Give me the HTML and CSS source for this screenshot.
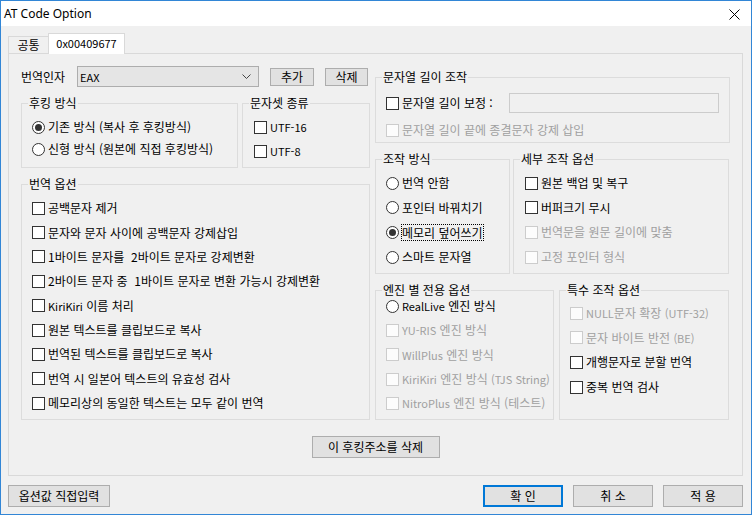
FILE: index.html
```html
<!DOCTYPE html>
<html lang="ko">
<head>
<meta charset="utf-8">
<title>AT Code Option</title>
<link rel="stylesheet" href="styles.css">
</head>
<body>
<div class="window">
  <header class="titlebar">
    <span class="title">AT Code Option</span>
    <svg class="close" width="11" height="11" viewBox="0 0 11 11"><path d="M0.5 0.5 L10.5 10.5 M10.5 0.5 L0.5 10.5" stroke="#000" stroke-width="1" fill="none"/></svg>
  </header>
  <main class="client">
    <nav class="tabs">
      <div class="tab tab-common">공통</div>
      <div class="tab tab-active"><span class="lat">0x00409677</span></div>
    </nav>
    <section class="panel">
      <div class="cols">
        <div class="col-left">
          <div class="arg-row">
            <span class="arg-label">번역인자</span>
            <div class="combo"><span class="lat">EAX</span><svg width="9" height="5" viewBox="0 0 9 5"><path d="M0.5 0.5 L4.5 4.5 L8.5 0.5" stroke="#444" stroke-width="1" fill="none"/></svg></div>
            <button class="btn btn-small btn-add">추가</button>
            <button class="btn btn-small btn-del">삭제</button>
          </div>

          <div class="group-row row-hook">
            <div class="group g-hook">
              <div class="gt">후킹 방식</div>
              <div class="items">
                <div class="item"><span class="rb on"></span><span>기존 방식 (복사 후 후킹방식)</span></div>
                <div class="item"><span class="rb"></span><span>신형 방식 (원본에 직접 후킹방식)</span></div>
              </div>
            </div>
            <div class="group g-charset">
              <div class="gt">문자셋 종류</div>
              <div class="items">
                <div class="item"><span class="cb"></span><span class="lat">UTF-16</span></div>
                <div class="item"><span class="cb"></span><span class="lat">UTF-8</span></div>
              </div>
            </div>
          </div>

          <div class="group g-trans">
            <div class="gt">번역 옵션</div>
            <div class="items">
              <div class="item"><span class="cb"></span><span>공백문자 제거</span></div>
              <div class="item"><span class="cb"></span><span>문자와 문자 사이에 공백문자 강제삽입</span></div>
              <div class="item"><span class="cb"></span><span>1바이트 문자를  2바이트 문자로 강제변환</span></div>
              <div class="item"><span class="cb"></span><span>2바이트 문자 중  1바이트 문자로 변환 가능시 강제변환</span></div>
              <div class="item"><span class="cb"></span><span><span class="lat">KiriKiri</span> 이름 처리</span></div>
              <div class="item"><span class="cb"></span><span>원본 텍스트를 클립보드로 복사</span></div>
              <div class="item"><span class="cb"></span><span>번역된 텍스트를 클립보드로 복사</span></div>
              <div class="item"><span class="cb"></span><span>번역 시 일본어 텍스트의 유효성 검사</span></div>
              <div class="item"><span class="cb"></span><span>메모리상의 동일한 텍스트는 모두 같이 번역</span></div>
            </div>
          </div>
        </div>

        <div class="col-right">
          <div class="group g-strlen">
            <div class="gt">문자열 길이 조작</div>
            <div class="items">
              <div class="item item-len"><span class="cb"></span><span>문자열 길이 보정 :</span><span class="edit"></span></div>
              <div class="item item-term dis"><span class="cb"></span><span>문자열 길이 끝에 종결문자 강제 삽입</span></div>
            </div>
          </div>

          <div class="group-row row-mode">
            <div class="group g-mode">
              <div class="gt">조작 방식</div>
              <div class="items">
                <div class="item"><span class="rb"></span><span>번역 안함</span></div>
                <div class="item"><span class="rb"></span><span>포인터 바꿔치기</span></div>
                <div class="item"><span class="rb on"></span><span class="focus">메모리 덮어쓰기</span></div>
                <div class="item"><span class="rb"></span><span>스마트 문자열</span></div>
              </div>
            </div>
            <div class="group g-detail">
              <div class="gt">세부 조작 옵션</div>
              <div class="items">
                <div class="item"><span class="cb"></span><span>원본 백업 및 복구</span></div>
                <div class="item"><span class="cb"></span><span>버퍼크기 무시</span></div>
                <div class="item dis"><span class="cb"></span><span>번역문을 원문 길이에 맞춤</span></div>
                <div class="item dis"><span class="cb"></span><span>고정 포인터 형식</span></div>
              </div>
            </div>
          </div>

          <div class="group-row row-engine">
            <div class="group g-engine">
              <div class="gt">엔진 별 전용 옵션</div>
              <div class="items">
                <div class="item"><span class="rb"></span><span><span class="lat">RealLive</span> 엔진 방식</span></div>
                <div class="item dis"><span class="cb"></span><span><span class="lat">YU-RIS</span> 엔진 방식</span></div>
                <div class="item dis"><span class="cb"></span><span><span class="lat">WillPlus</span> 엔진 방식</span></div>
                <div class="item dis"><span class="cb"></span><span><span class="lat">KiriKiri</span> 엔진 방식 <span class="lat">(TJS String)</span></span></div>
                <div class="item dis"><span class="cb"></span><span><span class="lat">NitroPlus</span> 엔진 방식 (테스트)</span></div>
              </div>
            </div>
            <div class="group g-special">
              <div class="gt">특수 조작 옵션</div>
              <div class="items">
                <div class="item dis"><span class="cb"></span><span><span class="lat">NULL</span>문자 확장 <span class="lat">(UTF-32)</span></span></div>
                <div class="item dis"><span class="cb"></span><span>문자 바이트 반전 <span class="lat">(BE)</span></span></div>
                <div class="item"><span class="cb"></span><span>개행문자로 분할 번역</span></div>
                <div class="item"><span class="cb"></span><span>중복 번역 검사</span></div>
              </div>
            </div>
          </div>
        </div>
      </div>
      <div class="center-row">
        <button class="btn btn-hookdel">이 후킹주소를 삭제</button>
      </div>
    </section>
    <footer class="bottom">
      <button class="btn btn-direct">옵션값 직접입력</button>
      <div class="dlg-buttons">
        <button class="btn btn-dlg btn-default">확 인</button>
        <button class="btn btn-dlg">취 소</button>
        <button class="btn btn-dlg">적 용</button>
      </div>
    </footer>
  </main>
</div>
</body>
</html>
```

FILE: styles.css
```css
* { box-sizing: border-box; }
html, body { margin: 0; padding: 0; }
body {
  width: 752px;
  height: 515px;
  overflow: hidden;
  background: #f0f0f0;
  color: #000;
  font-family: "Noto Sans CJK KR", "Noto Sans", sans-serif;
  font-size: 12px;
  line-height: 14px;
}
.lat { font-size: 11px; }

.window {
  width: 752px;
  height: 515px;
  border: 1px solid #3286d6;
  display: flex;
  flex-direction: column;
  background: #f0f0f0;
}

.titlebar {
  height: 25px;
  flex: none;
  background: #fff;
  display: flex;
  align-items: center;
  padding: 0 11px 0 3px;
}
.title {
  flex: 1;
  font-family: "Segoe UI", "Noto Sans", sans-serif;
  font-size: 12px;
  line-height: 16px;
}
.close { display: block; margin-top: 2px; }

.client {
  flex: 1;
  display: flex;
  flex-direction: column;
  padding: 7px 8px 0 7px;
}

/* tabs */
.tabs {
  display: flex;
  align-items: flex-end;
  height: 20px;
  flex: none;
}
.tab {
  border: 1px solid #d9d9d9;
  border-bottom: none;
  text-align: center;
  white-space: nowrap;
}
.tab-common {
  width: 41px;
  height: 17px;
  line-height: 15px;
}
.tab-active {
  width: 77px;
  height: 21px;
  margin-left: -1px;
  margin-bottom: -1px;
  line-height: 18px;
  background: #fff;
  position: relative;
  z-index: 1;
}

.panel {
  height: 423px;
  flex: none;
  border: 1px solid #d9d9d9;
  padding: 12px 12px 0 12px;
}
.cols {
  display: flex;
  justify-content: space-between;
}
.col-left { width: 349px; }
.col-right { width: 355px; }

/* argument row */
.arg-row {
  display: flex;
  align-items: center;
  height: 21px;
}
.arg-label { width: 56px; }
.combo {
  width: 182px;
  height: 21px;
  border: 1px solid #adadad;
  background: #e5e5e5;
  display: flex;
  align-items: center;
  justify-content: space-between;
  padding: 0 6px 0 2px;
}
.combo svg { display: block; margin-right: 1px; }

.btn {
  font: inherit;
  color: #000;
  background: #e1e1e1;
  border: 1px solid #adadad;
  padding: 0;
  margin: 0;
  text-align: center;
  white-space: nowrap;
}
.btn-small { height: 18px; line-height: 16px; }
.btn-add { width: 44px; margin-left: 11px; }
.btn-del { width: 43px; margin-left: 11px; }

/* group boxes */
.group {
  border: 1px solid #dcdcdc;
  flex: none;
}
.gt {
  width: fit-content;
  height: 14px;
  line-height: 14px;
  margin: -8px 0 0 6px;
  padding: 0 1px;
  background: #f0f0f0;
  white-space: nowrap;
}
.group-row {
  display: flex;
  justify-content: space-between;
}

.items { display: flex; flex-direction: column; }
.item {
  display: flex;
  align-items: center;
  gap: 3px;
  white-space: pre;
}
.item.dis { color: #a0a0a0; }

.cb {
  flex: none;
  width: 13px;
  height: 13px;
  border: 1px solid #333;
  background: #fff;
}
.dis .cb {
  border-color: #cccccc;
  background: #fcfcfc;
}
.rb {
  flex: none;
  width: 13px;
  height: 13px;
  border: 1px solid #333;
  border-radius: 50%;
  background: #fff;
  display: flex;
  align-items: center;
  justify-content: center;
}
.rb.on::after {
  content: "";
  width: 7px;
  height: 7px;
  border-radius: 50%;
  background: #333;
}
.focus {
  line-height: 15px;
  outline: 1px dotted #000;
}

/* left column groups */
.row-hook { margin-top: 16px; }
.row-hook .group { height: 65px; }
.g-hook { width: 217px; }
.g-hook .items { padding: 6px 0 0 10px; }
.g-hook .item { height: 22px; }
.g-charset { width: 128px; }
.g-charset .items { padding: 5px 0 0 11px; }
.g-charset .item { height: 24px; }

.g-trans { margin-top: 16px; height: 236px; }
.g-trans .items { padding: 5px 0 0 10px; }
.g-trans .item { height: 24.375px; }

/* right column groups */
.g-strlen { margin-top: 11px; height: 66px; }
.g-strlen .items { padding: 7px 10px 0 10px; }
.item-len { height: 24px; }
.item-term { height: 24px; margin-top: 3px; }
.edit {
  margin-left: auto;
  width: 210px;
  height: 20px;
  border: 1px solid #cccccc;
  background: #f0f0f0;
}

.row-mode { margin-top: 16px; }
.row-mode .group { height: 115px; }
.g-mode { width: 135px; }
.g-detail { width: 216px; margin-right: 1px; }
.g-mode .items { padding: 5px 0 0 10px; }
.g-detail .items { padding: 5px 0 0 11px; }
.row-mode .item { height: 24.6px; }

.row-engine { margin-top: 16px; }
.row-engine .group { height: 130px; }
.g-engine { width: 179px; }
.g-special { width: 170px; margin-right: 1px; }
.g-engine .items { margin-top: -3px; padding-left: 10px; }
.g-engine .item { height: 24.3px; }
.g-special .items { padding: 4px 0 0 10px; }
.g-special .item { height: 24.6px; }

.center-row {
  display: flex;
  justify-content: center;
  margin-top: 16px;
}
.btn-hookdel { width: 128px; height: 22px; line-height: 20px; }

/* bottom buttons */
.bottom {
  display: flex;
  justify-content: space-between;
  margin-top: 9px;
}
.btn-direct { width: 102px; height: 22px; line-height: 20px; }
.dlg-buttons { display: flex; gap: 10px; }
.btn-dlg { width: 80px; height: 22px; line-height: 20px; }
.btn-default {
  border-color: #0078d7;
  box-shadow: inset 0 0 0 1px #0078d7;
}
```
